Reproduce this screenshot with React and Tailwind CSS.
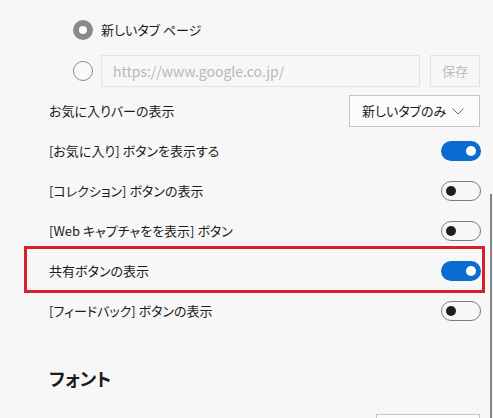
import React from 'react';

const Toggle = ({ on }) =>
    on ? (
        <div className="w-[40px] h-[20px] rounded-full bg-[#0a6cd0] flex items-center justify-end pr-[5px]">
            <div className="w-[10px] h-[10px] rounded-full bg-white" />
        </div>
    ) : (
        <div className="w-[40px] h-[20px] rounded-full border border-[#7a7a7a] flex items-center pl-[4px]">
            <div className="w-[10px] h-[10px] rounded-full bg-[#1f1f1f]" />
        </div>
    );

const ToggleRow = ({ label, on }) => (
    <div className="h-[40px] flex items-center justify-between pl-[49px] pr-[12px]">
        <span>{label}</span>
        <Toggle on={on} />
    </div>
);

const App = () => {
    return (
        <div
            className="relative w-[493px] h-[418px] overflow-hidden bg-[#f7f7f7] text-[13px] text-[#1b1b1b] [font-feature-settings:'palt']"
            style={{ fontFamily: '"Noto Sans CJK JP", "Noto Sans", sans-serif' }}
        >
            <div className="pt-[20px]">
                {/* start page options */}
                <div className="flex items-center gap-[8px] pl-[73px] h-[20px]">
                    <div className="w-[20px] h-[20px] rounded-full border-[6px] border-[#8a8a8a] bg-white" />
                    <span>新しいタブ ページ</span>
                </div>
                <div className="flex items-center pl-[73px] pr-[13px] mt-[15px] h-[32px]">
                    <div className="w-[20px] h-[20px] rounded-full border border-[#8a8a8a] bg-[#f9f9f9]" />
                    <div className="ml-[8px] flex-1 h-[32px] border border-[#e3e3e3] flex items-center pl-[11px] text-[14px] text-[#b8b8b8]">
                        https://www.google.co.jp/
                    </div>
                    <div className="ml-[10px] w-[50px] h-[32px] border border-[#e3e3e3] flex items-center justify-center text-[#bdbdbd]">
                        保存
                    </div>
                </div>

                <div className="flex items-center justify-between pl-[49px] pr-[13px] mt-[8px] h-[32px]">
                    <span>お気に入りバーの表示</span>
                    <div className="w-[131px] h-[32px] border border-[#c4c4c4] bg-[#fcfcfc] flex items-center justify-between pl-[12px] pr-[15px]">
                        <span>新しいタブのみ</span>
                        <svg width="12" height="7" viewBox="0 0 12 7" fill="none">
                            <path d="M0.5 0.5 L6 6 L11.5 0.5" stroke="#6b6b6b" strokeWidth="1" />
                        </svg>
                    </div>
                </div>

                <div className="mt-[4px]">
                    <ToggleRow label="[お気に入り] ボタンを表示する" on />
                    <ToggleRow label="[コレクション] ボタンの表示" />
                    <ToggleRow label="[Web キャプチャをを表示] ボタン" />
                    <ToggleRow label="共有ボタンの表示" on />
                    <ToggleRow label="[フィードバック] ボタンの表示" />
                </div>

                <div className="pl-[49px] mt-[33px] text-[18px] font-semibold leading-[28px]">フォント</div>

                <div className="flex justify-end pr-[13px] mt-[22px]">
                    <div className="w-[104px] h-[32px] border border-[#c4c4c4] bg-[#fcfcfc]" />
                </div>
            </div>

            {/* highlight annotation */}
            <div className="absolute left-[24px] top-[246px] w-[461px] h-[47px] border-[3px] border-[#d7202b]" />

            {/* scrollbar */}
            <div className="absolute left-[490px] top-[194px] w-[2px] h-[230px] bg-[#868686]" />
        </div>
    );
};

export default App;
